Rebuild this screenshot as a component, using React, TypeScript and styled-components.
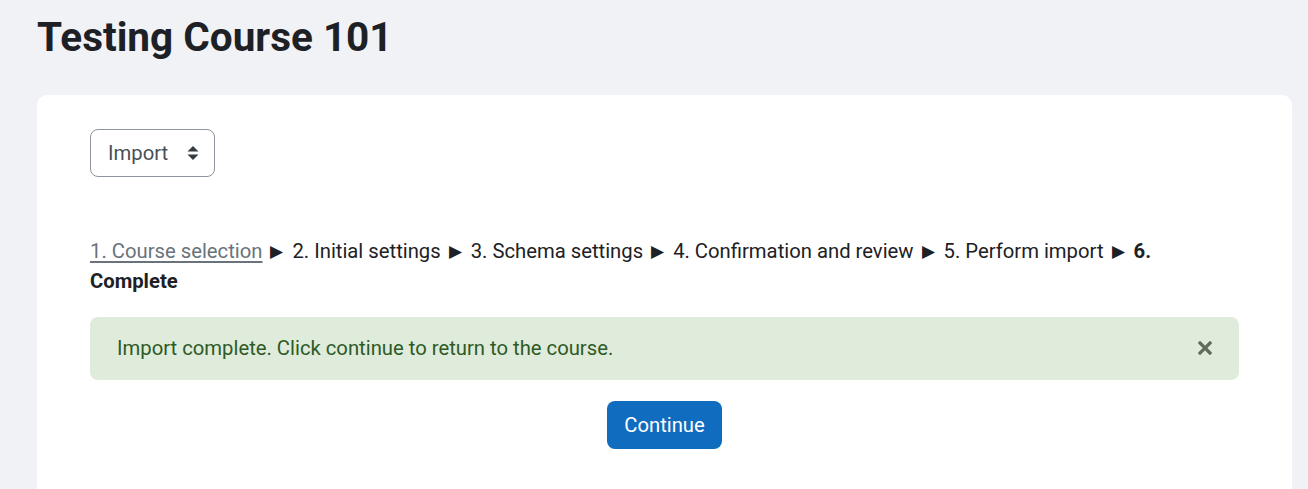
import React from "react";
import styled, { createGlobalStyle } from "styled-components";

const GlobalStyle = createGlobalStyle`
  html, body {
    margin: 0;
    padding: 0;
    background: #f1f2f6;
    font-family: Roboto, "Liberation Sans", Arial, sans-serif;
    color: #1d2125;
  }
`;

const Page = styled.div`
  padding: 13px 16px 0 37px;
  height: 489px;
  box-sizing: border-box;
  overflow: hidden;
`;

const Title = styled.h1`
  margin: 0 0 34px;
  font-size: 40.5px;
  line-height: 48px;
  font-weight: 700;
  color: #1d2125;
`;

const Card = styled.div`
  background: #fff;
  border-radius: 10px 10px 0 0;
  padding: 34px 53px 40px;
  min-height: 400px;
  font-size: 20.25px;
`;

const SelectBox = styled.div`
  display: inline-flex;
  align-items: center;
  gap: 19px;
  height: 48px;
  box-sizing: border-box;
  padding: 0 15px 0 17px;
  border: 1px solid #8f959e;
  border-radius: 8px;
  color: #495057;
`;

const Steps = styled.div`
  margin-top: 59px;
  line-height: 30px;
`;

const StepLink = styled.a`
  color: #6a737b;
  text-decoration: underline;
  text-underline-offset: 3px;
`;

const Arrow = styled.span`
  margin: 0 9px 0 8px;
  font-size: 17px;
  vertical-align: 1px;
`;

const Current = styled.b`
  font-weight: 700;
`;

const Alert = styled.div`
  margin-top: 21px;
  display: flex;
  align-items: center;
  justify-content: space-between;
  padding: 16px 27px 17px;
  background: #dfebdb;
  color: #2e5a26;
  border-radius: 8px;
  line-height: 30px;
`;

const Close = styled.button`
  border: 0;
  background: none;
  padding: 0;
  display: flex;
  color: #5f6b5d;
  cursor: pointer;
`;

const Actions = styled.div`
  display: flex;
  justify-content: center;
  margin-top: 21px;
`;

const Button = styled.button`
  height: 48px;
  padding: 0 17px;
  border: 0;
  border-radius: 8px;
  background: #0f6cbf;
  color: #fff;
  font-family: inherit;
  font-size: inherit;
`;

const Sep = () => <Arrow>▶</Arrow>;

const SortIcon = () => (
  <svg width="12" height="16" viewBox="0 0 12 16">
    <path d="M6 1 L11.5 6.5 H0.5 Z" fill="#343a40" />
    <path d="M6 15 L11.5 9.5 H0.5 Z" fill="#343a40" />
  </svg>
);

const TimesIcon = () => (
  <svg width="14" height="14" viewBox="0 0 14 14">
    <path d="M2 2 L12 12 M12 2 L2 12" stroke="currentColor" strokeWidth="3.2" strokeLinecap="square" />
  </svg>
);

export default function App() {
  return (
    <Page>
      <GlobalStyle />
      <Title>Testing Course 101</Title>
      <Card>
        <SelectBox>
          Import
          <SortIcon />
        </SelectBox>
        <Steps>
          <StepLink href="#">1. Course selection</StepLink>
          <Sep />2. Initial settings
          <Sep />3. Schema settings
          <Sep />4. Confirmation and review
          <Sep />5. Perform import
          <Sep />
          <Current>6. Complete</Current>
        </Steps>
        <Alert>
          Import complete. Click continue to return to the course.
          <Close aria-label="Dismiss">
            <TimesIcon />
          </Close>
        </Alert>
        <Actions>
          <Button>Continue</Button>
        </Actions>
      </Card>
    </Page>
  );
}
